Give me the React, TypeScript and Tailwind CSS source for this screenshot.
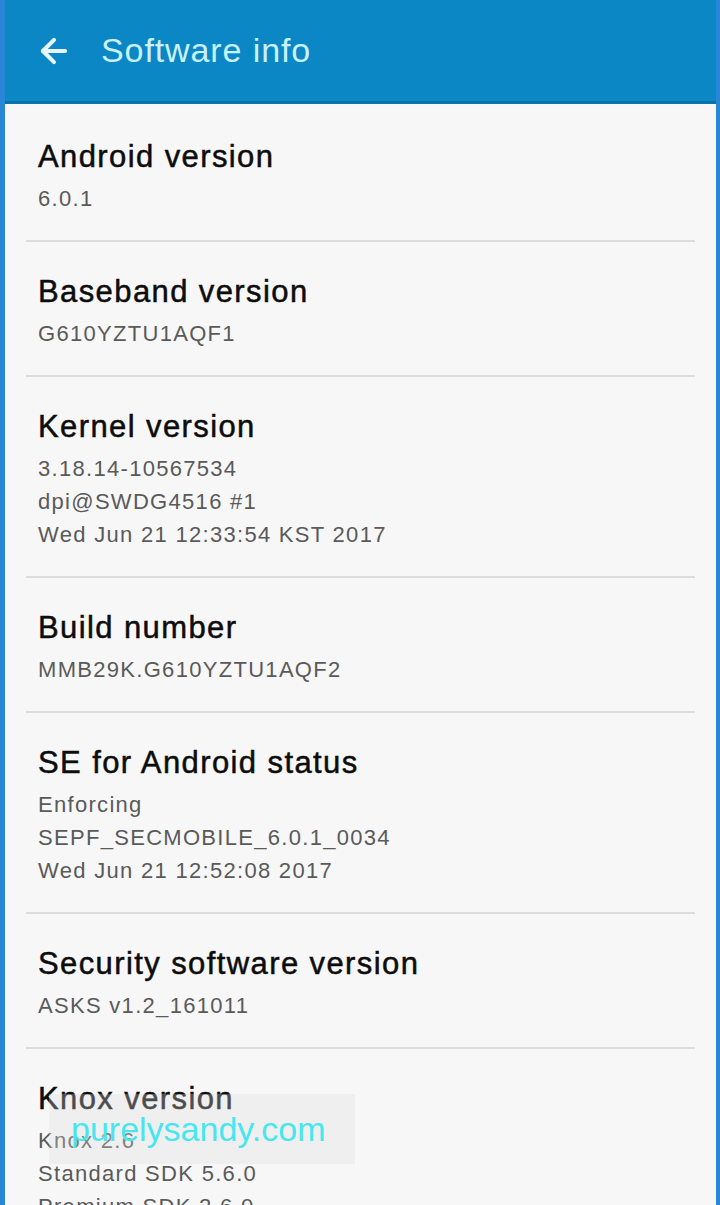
import { ArrowLeft } from "lucide-react";

type InfoItemProps = {
    title: string;
    lines: string[];
    first?: boolean;
    last?: boolean;
};

const items = [
    { title: "Android version", lines: ["6.0.1"] },
    { title: "Baseband version", lines: ["G610YZTU1AQF1"] },
    {
        title: "Kernel version",
        lines: ["3.18.14-10567534", "dpi@SWDG4516 #1", "Wed Jun 21 12:33:54 KST 2017"],
    },
    { title: "Build number", lines: ["MMB29K.G610YZTU1AQF2"] },
    {
        title: "SE for Android status",
        lines: ["Enforcing", "SEPF_SECMOBILE_6.0.1_0034", "Wed Jun 21 12:52:08 2017"],
    },
    { title: "Security software version", lines: ["ASKS v1.2_161011"] },
    {
        title: "Knox version",
        lines: ["Knox 2.6", "Standard SDK 5.6.0", "Premium SDK 2.6.0"],
    },
];

function InfoItem({ title, lines, first, last }: InfoItemProps) {
    return (
        <div className="mx-[21px]">
            <div className={`px-[12px] ${first ? "pt-[35px]" : "pt-[32px]"} pb-[25px]`}>
                <p className="text-[31px] leading-[36px] text-[#0d0d0d] tracking-[1.4px] [-webkit-text-stroke:0.5px_#0d0d0d]">
                    {title}
                </p>
                <div className="mt-[7px]">
                    {lines.map((line) => (
                        <p key={line} className="text-[22px] leading-[33px] text-[#5a5a5a] tracking-[1.3px]">
                            {line}
                        </p>
                    ))}
                </div>
            </div>
            {!last && <div className="h-[2px] bg-[#dcdcdc]" />}
        </div>
    );
}

export default function App() {
    return (
        <div
            className="w-[720px] h-[1205px] overflow-hidden bg-[#f7f7f7] border-l-[5px] border-r-[4px] border-[#2a86d6] flex flex-col relative"
            style={{ fontFamily: '"Liberation Sans", Arial, sans-serif' }}
        >
            <header className="h-[104px] shrink-0 bg-[#0a87c4] border-b-[3px] border-[#0873ab] flex items-center pl-[30px] gap-[28px]">
                <ArrowLeft size={38} strokeWidth={2.6} className="text-[#e6f7ff]" />
                <h1 className="text-[34px] text-[#c9f1ff] tracking-[0.9px]">Software info</h1>
            </header>
            <div className="flex flex-col">
                {items.map((item, i) => (
                    <InfoItem
                        key={item.title}
                        title={item.title}
                        lines={item.lines}
                        first={i === 0}
                        last={i === items.length - 1}
                    />
                ))}
            </div>
            <div className="absolute left-[44px] top-[1094px] w-[306px] h-[70px] bg-[#dddddd]/30 flex items-center pl-[22px]">
                <span className="text-[34px] text-[#48e6ef] leading-none">purelysandy.com</span>
            </div>
        </div>
    );
}
